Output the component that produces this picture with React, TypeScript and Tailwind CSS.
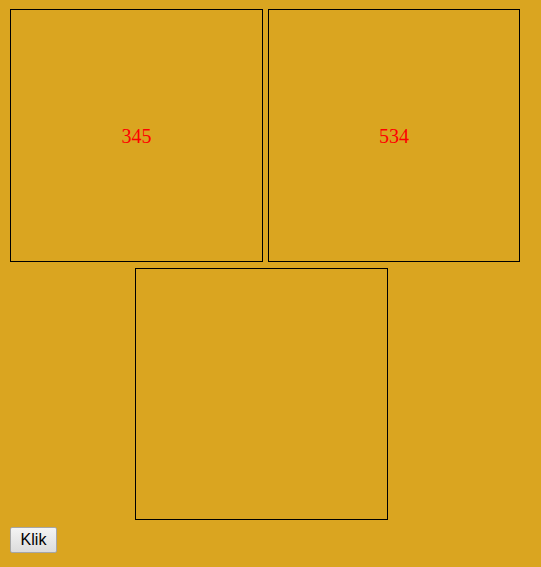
export default function App() {
  return (
    <div className="min-h-[567px] w-full bg-[#daa520] pl-[10px] pt-[9px]">
      {/* top row */}
      <div className="flex gap-[5px]">
        <div className="w-[253px] h-[253px] border border-black flex items-center justify-center">
          <span className="text-[20px] text-[#ff0000] font-['Liberation_Serif',serif]">345</span>
        </div>
        <div className="w-[252px] h-[253px] border border-black flex items-center justify-center">
          <span className="text-[20px] text-[#ff0000] font-['Liberation_Serif',serif]">534</span>
        </div>
      </div>

      {/* bottom box */}
      <div className="mt-[6px] ml-[125px] w-[253px] h-[252px] border border-black"></div>

      <button className="mt-[7px] w-[47px] h-[26px] border border-[#a6a6a6] rounded-[2px] bg-gradient-to-b from-[#f4f4f4] to-[#dcdcdc] text-[16px] text-[#000] font-['Liberation_Sans',Arial,sans-serif] leading-none">
        Klik
      </button>
    </div>
  );
}
